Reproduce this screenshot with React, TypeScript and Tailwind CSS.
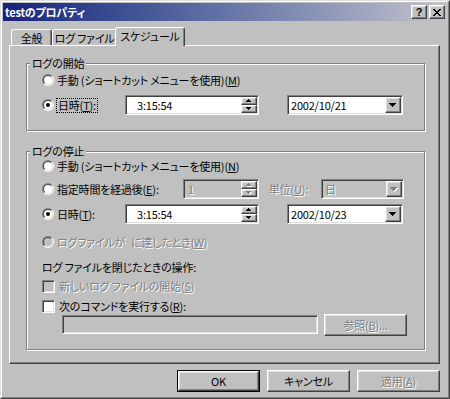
import React from "react";

const FONT =
  "font-['Noto_Sans_CJK_JP','Noto_Sans_CJK_SC',sans-serif] [font-feature-settings:'palt']";
const raised =
  "border border-t-white border-l-white border-r-[#404040] border-b-[#404040] shadow-[inset_-1px_-1px_0_#808080,inset_1px_1px_0_#dfdfdf]";
const sunken =
  "border border-t-[#808080] border-l-[#808080] border-r-white border-b-white shadow-[inset_1px_1px_0_#404040,inset_-1px_-1px_0_#dfdfdf]";
const dis = "text-[#808080] [text-shadow:1px_1px_0_#fff]";

type R = [number, number, number];

function Pix({
  rects,
  w,
  h,
  disabled,
}: {
  rects: R[];
  w: number;
  h: number;
  disabled?: boolean;
}) {
  return (
    <svg width={w + 1} height={h + 1} viewBox={`0 0 ${w + 1} ${h + 1}`} shapeRendering="crispEdges">
      {disabled &&
        rects.map(([x, y, ww], i) => (
          <rect key={"s" + i} x={x + 1} y={y + 1} width={ww} height={1} fill="#fff" />
        ))}
      {rects.map(([x, y, ww], i) => (
        <rect key={i} x={x} y={y} width={ww} height={1} fill={disabled ? "#808080" : "#000"} />
      ))}
    </svg>
  );
}

const down7: R[] = [
  [0, 0, 7],
  [1, 1, 5],
  [2, 2, 3],
  [3, 3, 1],
];
const up5: R[] = [
  [2, 0, 1],
  [1, 1, 3],
  [0, 2, 5],
];
const down5: R[] = [
  [0, 0, 5],
  [1, 1, 3],
  [2, 2, 1],
];

function Radio({ checked, disabled }: { checked?: boolean; disabled?: boolean }) {
  return (
    <div className="w-[12px] h-[12px] rounded-full border border-t-[#808080] border-l-[#808080] border-r-white border-b-white shrink-0">
      <div
        className={`w-full h-full rounded-full border border-t-[#404040] border-l-[#404040] border-r-[#dfdfdf] border-b-[#dfdfdf] flex items-center justify-center ${
          disabled ? "bg-[#c0c0c0]" : "bg-white"
        }`}
      >
        {checked && <div className="w-[4px] h-[4px] rounded-full bg-black" />}
      </div>
    </div>
  );
}

function Check({ disabled }: { disabled?: boolean }) {
  return (
    <div
      className={`w-[13px] h-[13px] shrink-0 ${sunken} ${disabled ? "bg-[#c0c0c0]" : "bg-white"}`}
    />
  );
}

function Spinner({ disabled }: { disabled?: boolean }) {
  return (
    <div className="flex flex-col w-[16px] h-full shrink-0">
      <div className={`h-[8px] ${raised} bg-[#c0c0c0] flex items-center justify-center`}>
        <Pix rects={up5} w={5} h={3} disabled={disabled} />
      </div>
      <div className={`h-[8px] ${raised} bg-[#c0c0c0] flex items-center justify-center`}>
        <Pix rects={down5} w={5} h={3} disabled={disabled} />
      </div>
    </div>
  );
}

function SpinField({
  value,
  w,
  disabled,
  indent,
}: {
  value: string;
  w: string;
  disabled?: boolean;
  indent: string;
}) {
  return (
    <div
      className={`${w} h-[20px] shrink-0 ${sunken} p-[1px] flex items-center ${
        disabled ? "bg-[#c0c0c0]" : "bg-white"
      }`}
    >
      <span className={`flex-1 ${indent} ${disabled ? dis : ""}`}>{value}</span>
      <Spinner disabled={disabled} />
    </div>
  );
}

function Combo({
  value,
  w,
  disabled,
}: {
  value: string;
  w: string;
  disabled?: boolean;
}) {
  return (
    <div
      className={`${w} h-[20px] shrink-0 ${sunken} p-[1px] flex items-center ${
        disabled ? "bg-[#c0c0c0]" : "bg-white"
      }`}
    >
      <span className={`flex-1 pl-[2px] ${disabled ? dis : ""}`}>{value}</span>
      <div className={`w-[16px] h-[16px] ${raised} bg-[#c0c0c0] flex items-center justify-center`}>
        <Pix rects={down7} w={7} h={4} disabled={disabled} />
      </div>
    </div>
  );
}

function Group({
  label,
  className,
  children,
}: {
  label: string;
  className: string;
  children: React.ReactNode;
}) {
  return (
    <div
      className={`relative w-[399px] border border-[#808080] shadow-[inset_1px_1px_0_#fff,1px_1px_0_#fff] pl-[15px] flex flex-col ${className}`}
    >
      <span className="absolute -top-[8px] left-[3px] bg-[#c0c0c0] px-[2px] leading-[14px]">
        {label}
      </span>
      {children}
    </div>
  );
}

function Tab({
  label,
  w,
  selected,
}: {
  label: string;
  w: string;
  selected?: boolean;
}) {
  return (
    <div
      className={`${w} shrink-0 ${
        selected ? "h-[19px] -ml-[2px] -mb-[1px] relative z-10 pt-[1px]" : "h-[16px] pt-[1px]"
      } bg-[#c0c0c0] border-t border-l border-r border-t-white border-l-white border-r-[#404040] rounded-t-[3px] shadow-[inset_-1px_0_0_#808080] flex justify-center leading-[14px] whitespace-nowrap`}
    >
      {label}
    </div>
  );
}

function Btn({
  label,
  disabled,
  def,
}: {
  label: React.ReactNode;
  disabled?: boolean;
  def?: boolean;
}) {
  const inner = (
    <div
      className={`w-full h-full ${raised} flex items-center justify-center ${disabled ? dis : ""}`}
    >
      {label}
    </div>
  );
  return (
    <div className={`w-[83px] h-[22px] ${def ? "border border-black" : ""}`}>{inner}</div>
  );
}

export default function App() {
  return (
    <div
      className={`w-[450px] h-[399px] ${FONT} text-[11px] tracking-[-0.2px] whitespace-nowrap text-black border border-t-[#dfdfdf] border-l-[#dfdfdf] border-r-[#404040] border-b-[#404040]`}
    >
      <div className="w-full h-full bg-[#c0c0c0] border border-t-white border-l-white border-r-[#808080] border-b-[#808080] p-[1px] flex flex-col">
        {/* Title bar */}
        <div className="h-[18px] shrink-0 bg-linear-to-r from-[#18207a] to-[#c4c4cc] flex items-center pl-[2px] pr-[2px]">
          <span className="flex-1 text-white font-bold leading-none">testのプロパティ</span>
          <div className="flex gap-[2px]">
            <div
              className={`w-[16px] h-[14px] bg-[#c0c0c0] ${raised} flex items-center justify-center font-['Liberation_Sans',sans-serif] font-bold text-[11px] leading-none`}
            >
              ?
            </div>
            <div className={`w-[16px] h-[14px] bg-[#c0c0c0] ${raised} flex items-center justify-center`}>
              <svg width="8" height="7" viewBox="0 0 8 7" shapeRendering="crispEdges">
                <rect x="0" y="0" width="2" height="1" />
                <rect x="6" y="0" width="2" height="1" />
                <rect x="1" y="1" width="2" height="1" />
                <rect x="5" y="1" width="2" height="1" />
                <rect x="2" y="2" width="4" height="1" />
                <rect x="3" y="3" width="2" height="1" />
                <rect x="2" y="4" width="4" height="1" />
                <rect x="1" y="5" width="2" height="1" />
                <rect x="5" y="5" width="2" height="1" />
                <rect x="0" y="6" width="2" height="1" />
                <rect x="6" y="6" width="2" height="1" />
              </svg>
            </div>
          </div>
        </div>

        {/* Tabs */}
        <div className="mt-[6px] ml-[6px] h-[18px] shrink-0 flex items-end pl-[2px]">
          <Tab label="全般" w="w-[41px]" />
          <Tab label="ログ ファイル" w="w-[65px]" />
          <Tab label="スケジュール" w="w-[70px]" selected />
        </div>

        {/* Panel */}
        <div className="ml-[6px] w-[431px] h-[319px] shrink-0 border border-t-white border-l-white border-r-[#404040] border-b-[#404040] shadow-[inset_-1px_-1px_0_#808080] pt-[17px] pl-[16px] flex flex-col">
          <Group label="ログの開始" className="pt-[8px] pb-[15px]">
            <div className="h-[16px] flex items-center">
              <Radio />
              <span className="ml-[3px]">
                手動 (ショートカット メニューを使用)(<u>M</u>)
              </span>
            </div>
            <div className="mt-[7px] h-[20px] flex items-center">
              <div className="w-[83px] flex items-center">
                <Radio checked />
                <span className="ml-[2px] px-[1px] border border-dotted border-black leading-[13px]">
                  日時(<u>T</u>):
                </span>
              </div>
              <SpinField value="3:15:54" w="w-[134px]" indent="pl-[10px]" />
              <div className="ml-[28px]">
                <Combo value="2002/10/21" w="w-[116px]" />
              </div>
            </div>
          </Group>

          <Group label="ログの停止" className="mt-[20px] pt-[6px] pb-[14px]">
            <div className="h-[16px] flex items-center">
              <Radio />
              <span className="ml-[3px]">
                手動 (ショートカット メニューを使用)(<u>N</u>)
              </span>
            </div>
            <div className="mt-[5px] h-[20px] flex items-center">
              <div className="w-[141px] flex items-center">
                <Radio />
                <span className="ml-[3px]">
                  指定時間を経過後(<u>E</u>):
                </span>
              </div>
              <SpinField value="1" w="w-[76px]" indent="pl-[3px]" disabled />
              <span className={`ml-[10px] w-[52px] ${dis}`}>
                単位(<u>U</u>):
              </span>
              <Combo value="日" w="w-[83px]" disabled />
            </div>
            <div className="mt-[5px] h-[20px] flex items-center">
              <div className="w-[83px] flex items-center">
                <Radio checked />
                <span className="ml-[3px]">
                  日時(<u>T</u>):
                </span>
              </div>
              <SpinField value="3:15:54" w="w-[134px]" indent="pl-[10px]" />
              <div className="ml-[28px]">
                <Combo value="2002/10/23" w="w-[116px]" />
              </div>
            </div>
            <div className="mt-[10px] h-[16px] flex items-center">
              <Radio disabled />
              <span className={`ml-[3px] ${dis}`}>ログファイルが</span>
              <span className={`ml-[6px] ${dis}`}>
                に達したとき(<u>W</u>)
              </span>
            </div>
            <div className="mt-[9px] h-[16px] flex items-center">ログ ファイルを閉じたときの操作:</div>
            <div className="mt-[3px] h-[16px] flex items-center">
              <Check disabled />
              <span className={`ml-[4px] ${dis}`}>
                新しいログ ファイルの開始(<u>S</u>)
              </span>
            </div>
            <div className="mt-[4px] h-[16px] flex items-center">
              <Check />
              <span className="ml-[4px]">
                次のコマンドを実行する(<u>R</u>):
              </span>
            </div>
            <div className="h-[21px] flex items-center">
              <div className={`ml-[20px] w-[256px] h-[19px] ${sunken} bg-[#c0c0c0]`} />
              <div className="ml-[6px] w-[85px] h-[21px]">
                <Btn
                  label={
                    <>
                      参照(<u>B</u>)...
                    </>
                  }
                  disabled
                />
              </div>
            </div>
          </Group>
        </div>

        {/* Buttons */}
        <div className="mt-[6px] ml-[6px] w-[431px] flex justify-end gap-[7px]">
          <Btn label="OK" def />
          <Btn label="キャンセル" />
          <Btn
            label={
              <>
                適用(<u>A</u>)
              </>
            }
            disabled
          />
        </div>
      </div>
    </div>
  );
}
